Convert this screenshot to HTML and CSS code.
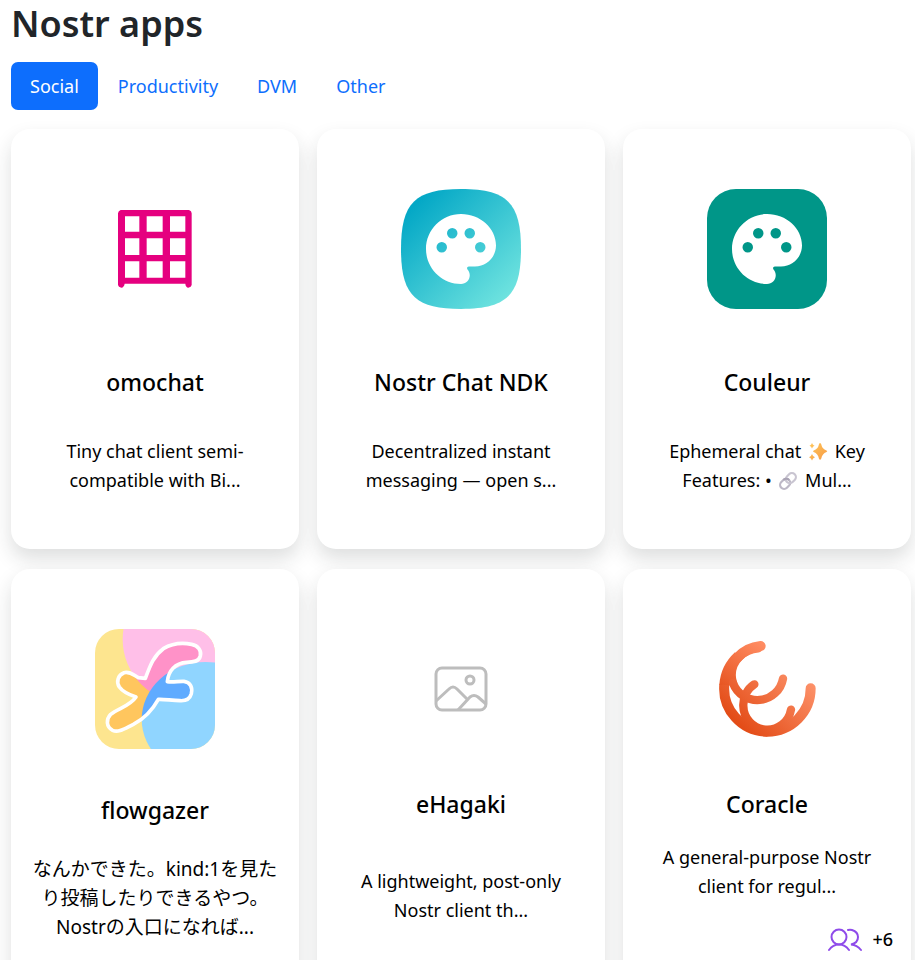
FILE: index.html
```html
<!DOCTYPE html>
<html lang="en">
<head>
<meta charset="utf-8">
<meta name="viewport" content="width=device-width, initial-scale=1">
<title>Nostr apps</title>
<link rel="stylesheet" href="styles.css">
</head>
<body>
<main class="page">
  <h1 class="page-title">Nostr apps</h1>
  <nav class="tabs" aria-label="Categories">
    <a class="tab tab-active" href="#social" aria-current="page">Social</a>
    <a class="tab" href="#productivity">Productivity</a>
    <a class="tab" href="#dvm">DVM</a>
    <a class="tab" href="#other">Other</a>
  </nav>

  <section class="grid" id="social">
    <article class="card">
      <div class="media">
        <svg class="logo" viewBox="15 30 360 360" aria-hidden="true">
          <path fill="#e5007f" fill-rule="evenodd" d="M92 93H297Q305 95 305 103V318Q304 325 295 326Q287 325 286 314H104Q102 325 94 326Q85 325 84 318V103Q85 95 92 93ZM105 112V158H148V112ZM170 112V158H218V112ZM240 112V158H286V112ZM105 178V228H148V178ZM170 178V228H218V178ZM240 178V228H286V178ZM105 247V296H148V247ZM170 247V296H218V247ZM240 247V296H286V247Z"/>
        </svg>
      </div>
      <h2 class="name">omochat</h2>
      <p class="about">Tiny chat client semi-compatible with Bi...</p>
    </article>

    <article class="card">
      <div class="media">
        <svg class="logo" viewBox="0 0 120 120" aria-hidden="true">
          <defs>
            <linearGradient id="sea" x1="0.1" y1="0.15" x2="0.9" y2="0.95">
              <stop offset="0" stop-color="#04a8c6"/>
              <stop offset="1" stop-color="#72e5e0"/>
            </linearGradient>
          </defs>
          <path fill="url(#sea)" d="M0 60C0 14 14 0 60 0S120 14 120 60 106 120 60 120 0 106 0 60Z"/>
          <path fill="#fff" fill-rule="evenodd" transform="translate(18 18) scale(3.5)" d="M12 2C6.49 2 2 6.49 2 12s4.49 10 10 10c1.38 0 2.5-1.12 2.5-2.5 0-.61-.23-1.2-.64-1.67-.08-.1-.13-.21-.13-.33 0-.28.22-.5.5-.5H16c3.31 0 6-2.69 6-6 0-4.96-4.49-9-10-9zM5 11.5a1.5 1.5 0 0 0 3 0 1.5 1.5 0 0 0-3 0zM8 7.5a1.5 1.5 0 0 0 3 0 1.5 1.5 0 0 0-3 0zM13 7.5a1.5 1.5 0 0 0 3 0 1.5 1.5 0 0 0-3 0zM16 11.5a1.5 1.5 0 0 0 3 0 1.5 1.5 0 0 0-3 0z"/>
        </svg>
      </div>
      <h2 class="name">Nostr Chat NDK</h2>
      <p class="about">Decentralized instant messaging — open s...</p>
    </article>

    <article class="card">
      <div class="media">
        <svg class="logo" viewBox="0 0 120 120" aria-hidden="true">
          <rect width="120" height="120" rx="29" fill="#009688"/>
          <path fill="#fff" fill-rule="evenodd" transform="translate(18 18) scale(3.5)" d="M12 2C6.49 2 2 6.49 2 12s4.49 10 10 10c1.38 0 2.5-1.12 2.5-2.5 0-.61-.23-1.2-.64-1.67-.08-.1-.13-.21-.13-.33 0-.28.22-.5.5-.5H16c3.31 0 6-2.69 6-6 0-4.96-4.49-9-10-9zM5 11.5a1.5 1.5 0 0 0 3 0 1.5 1.5 0 0 0-3 0zM8 7.5a1.5 1.5 0 0 0 3 0 1.5 1.5 0 0 0-3 0zM13 7.5a1.5 1.5 0 0 0 3 0 1.5 1.5 0 0 0-3 0zM16 11.5a1.5 1.5 0 0 0 3 0 1.5 1.5 0 0 0-3 0z"/>
        </svg>
      </div>
      <h2 class="name">Couleur</h2>
      <p class="about"><span>Ephemeral chat</span>
        <svg class="emoji" viewBox="0 0 20 20" role="img" aria-label="sparkles">
          <defs>
            <linearGradient id="spark" x1="0" y1="0" x2="1" y2="1">
              <stop offset="0" stop-color="#ffc75a"/>
              <stop offset="1" stop-color="#f79a45"/>
            </linearGradient>
          </defs>
          <path fill="url(#spark)" d="M12 1Q13 1 13.3 2.5Q14.200 7 18.500 8.600Q20 9.300 18.500 10.100Q14.200 11.700 13.300 16.500Q12 19 10.900 16.500Q10 11.700 5.700 10.100Q4.200 9.300 5.700 8.600Q10 7 10.900 2.500Q11.200 1 12 1ZM4 1Q4.600 3 6.500 3.700Q4.600 4.400 4 6.500Q3.400 4.400 1.500 3.700Q3.400 3 4 1ZM4 12Q4.700 14.500 7 15.300Q4.700 16 4 18.500Q3.300 16 1 15.300Q3.300 14.500 4 12Z"/>
        </svg>
        <span>Key</span> <span>Features: •</span>
        <svg class="emoji" viewBox="0 0 20 20" role="img" aria-label="link">
          <g fill="none" stroke-width="2.200" transform="rotate(-45 10 10)">
            <rect x="0.500" y="6" width="11" height="8" rx="4" stroke="#bdb8c6"/>
            <rect x="8.500" y="6" width="11" height="8" rx="4" stroke="#c9c5d1"/>
            <path d="M7.500 6A4 4 0 0 1 11.500 10" stroke="#aaa4b5"/>
          </g>
        </svg>
        <span>Mul...</span></p>
    </article>

    <article class="card card-long">
      <div class="media">
        <svg class="logo" viewBox="15 24 360 360" aria-hidden="true">
          <defs>
            <clipPath id="tile"><rect x="15" y="24" width="360" height="360" rx="72"/></clipPath>
            <path id="bird" d="M166 172C180 135 190 105 220 83C250 65 280 65 305 70C325 74 335 90 331 105C327 122 310 124 290 124C255 126 235 150 232 182C250 185 265 180 282 181C302 184 308 200 304 218C299 235 285 240 270 239C245 239 225 234 205 235C190 262 165 292 130 310C105 322 85 336 68 328C48 318 48 295 62 280C85 262 120 255 138 228C120 222 98 212 88 198C78 182 84 162 102 155C120 150 130 162 145 170Z"/>
            <clipPath id="bird-clip"><use href="#bird"/></clipPath>
          </defs>
          <g clip-path="url(#tile)">
            <rect x="15" y="24" width="360" height="360" fill="#fde58f"/>
            <circle cx="290" cy="55" r="192" fill="#ffbfe8"/>
            <ellipse cx="347" cy="295" rx="192" ry="172" fill="#90d5ff"/>
          </g>
          <g clip-path="url(#bird-clip)">
            <rect x="15" y="24" width="360" height="360" fill="#ffc65e"/>
            <circle cx="290" cy="55" r="192" fill="#ff92c8"/>
            <ellipse cx="347" cy="295" rx="192" ry="172" fill="#60abff"/>
          </g>
          <use href="#bird" fill="none" stroke="#fff" stroke-width="11" stroke-linejoin="round"/>
        </svg>
      </div>
      <h2 class="name">flowgazer</h2>
      <p class="about about-ja" lang="ja">なんかできた。kind:1を見たり投稿したりできるやつ。Nostrの入口になれば...</p>
    </article>

    <article class="card card-roomy">
      <div class="media">
        <svg class="placeholder" viewBox="0 0 54 46" aria-hidden="true">
          <g fill="none" stroke="#bdbdbd" stroke-width="3">
            <rect x="2" y="2" width="50" height="42" rx="6"/>
            <circle cx="36" cy="14" r="4"/>
            <path d="M2 35L15 23Q19 19 23 23L33 33M24 44L36 31Q40 28 44 31L52 38" stroke-linejoin="round"/>
          </g>
        </svg>
      </div>
      <h2 class="name">eHagaki</h2>
      <p class="about">A lightweight, post-only Nostr client th...</p>
    </article>

    <article class="card card-people">
      <div class="media">
        <svg class="logo" viewBox="6 -6 360 360" aria-hidden="true">
          <defs>
            <linearGradient id="ember" gradientUnits="userSpaceOnUse" x1="100" y1="280" x2="280" y2="90">
              <stop offset="0" stop-color="#e34c17"/>
              <stop offset="1" stop-color="#ff9770"/>
            </linearGradient>
            <linearGradient id="ember-top" gradientUnits="userSpaceOnUse" x1="80" y1="220" x2="190" y2="50">
              <stop offset="0" stop-color="#e34c17"/>
              <stop offset="1" stop-color="#ff8c62"/>
            </linearGradient>
          </defs>
          <g fill="none" stroke-linecap="round">
            <path stroke="url(#ember)" stroke-width="25" d="M148 160A74 74 0 0 0 115 225A72 72 0 0 0 258 236"/>
            <path stroke="url(#ember)" stroke-width="30" stroke-linecap="butt" d="M58 160A130 130 0 0 0 187 302"/>
            <path stroke="url(#ember)" stroke-width="30" d="M187 302A130 130 0 0 0 317 172"/>
            <path stroke="url(#ember-top)" stroke-width="30" stroke-linecap="butt" d="M100 75A130 130 0 0 0 58 162"/>
            <path stroke="url(#ember-top)" stroke-width="30" d="M167 45Q125 49 97 80"/>
            <path stroke="url(#ember-top)" stroke-width="25" d="M160 52C115 55 80 90 80 132Q80 145 84 156"/>
            <path stroke="url(#ember)" stroke-width="25" d="M84 156A78 78 0 0 0 234 143"/>
          </g>
        </svg>
      </div>
      <h2 class="name">Coracle</h2>
      <p class="about">A general-purpose Nostr client for regul...</p>
      <div class="people">
        <svg class="people-icon" viewBox="0 0 34 24" role="img" aria-label="Users">
          <g fill="none" stroke="#8f4bea" stroke-width="2" stroke-linecap="round">
            <circle cx="11" cy="9" r="7.500"/>
            <path d="M1 22Q5 16.500 11 16.500Q17 16.500 21 22M20 2Q22 1.500 24 2Q30 4 30 9Q30 15 23 16.500Q29 17 33 22"/>
          </g>
        </svg>
        <span>+6</span>
      </div>
    </article>
  </section>
</main>
</body>
</html>
```
FILE: styles.css
```css
* {
  box-sizing: border-box;
}

body {
  margin: 0;
  background: #fff;
  color: #212529;
  font-family: "Noto Sans", "Noto Sans CJK JP", sans-serif;
  font-size: 18px;
  line-height: 29px;
}

.page {
  height: 100vh;
  overflow: hidden;
  padding: 0 4px 0 11px;
}

.page-title {
  margin: 0 0 14px;
  font-size: 36px;
  line-height: 48px;
  font-weight: 600;
}

.tabs {
  display: flex;
  gap: 1px;
  margin-bottom: 19px;
}

.tab {
  padding: 10px 19px 9px;
  border-radius: 7px;
  color: #0d6efd;
  text-decoration: none;
}

.tab-active {
  background: #0d6efd;
  color: #fff;
}

.grid {
  display: grid;
  grid-template-columns: repeat(3, minmax(0, 1fr));
  grid-auto-rows: 420px;
  gap: 20px 18px;
}

.card {
  display: flex;
  flex-direction: column;
  align-items: center;
  padding: 30px 22px 0;
  border-radius: 19px;
  background: #fff;
  box-shadow: 0 10px 19px rgba(33, 37, 41, 0.15);
  color: #000;
  text-align: center;
}

.media {
  display: flex;
  align-items: center;
  justify-content: center;
  height: 180px;
}

.logo {
  width: 120px;
  height: 120px;
}

.placeholder {
  width: 54px;
  height: 46px;
}

.name {
  margin: 28px 0 40px;
  font-size: 23px;
  line-height: 30px;
  font-weight: 500;
}

.about {
  margin: 0;
}

.about-ja {
  margin: 0 -5px;
  font-size: 19px;
}

.emoji {
  width: 20px;
  height: 20px;
  margin: 0 2px;
  vertical-align: -4px;
}

.card-long .name {
  margin: 16px 0 30px;
}

.card-roomy .name {
  margin: 10px 0 48px;
}

.card-people .name {
  margin: 10px 0 24px;
}

.people {
  display: flex;
  align-items: center;
  align-self: flex-end;
  gap: 10px;
  margin: 24px -4px 0 0;
  font-weight: 500;
}

.people-icon {
  width: 34px;
  height: 24px;
}
```
